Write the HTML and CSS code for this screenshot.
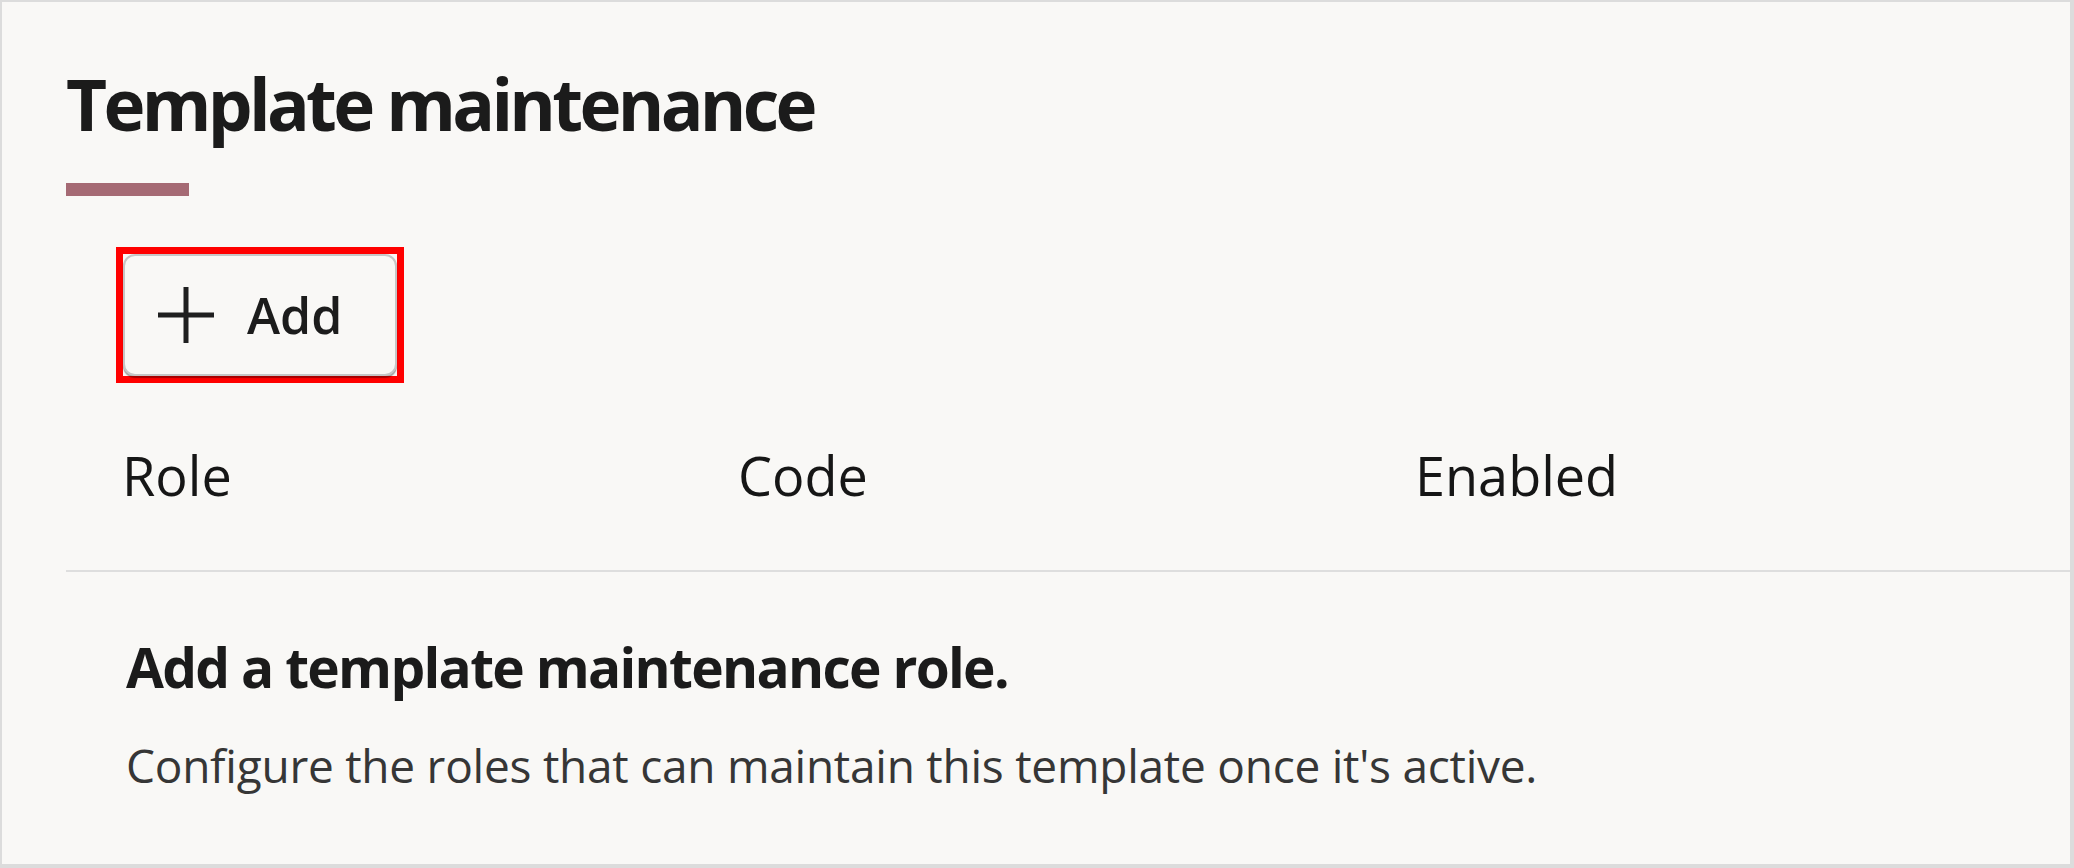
FILE: index.html
```html
<!DOCTYPE html>
<html lang="en">
<head>
    <meta charset="UTF-8">
    <meta name="viewport" content="width=device-width, initial-scale=1.0">
    <title>Template maintenance</title>
    <link rel="stylesheet" href="styles.css">
</head>
<body>
    <div class="panel">
        <h1 class="panel-title">Template maintenance</h1>
        <div class="title-accent"></div>

        <div class="toolbar">
            <span class="highlight">
                <button class="add-button" type="button">
                    <svg class="add-icon" viewBox="0 0 58 58" aria-hidden="true">
                        <line x1="29" y1="1" x2="29" y2="57" />
                        <line x1="1" y1="29" x2="57" y2="29" />
                    </svg>
                    <span>Add</span>
                </button>
            </span>
        </div>

        <div class="table-header">
            <div class="col">Role</div>
            <div class="col">Code</div>
            <div class="col">Enabled</div>
        </div>

        <div class="empty-state">
            <h2>Add a template maintenance role.</h2>
            <p>Configure the roles that can maintain this template once it's active.</p>
        </div>
    </div>
</body>
</html>
```

FILE: styles.css
```css
html, body {
    margin: 0;
    padding: 0;
}
body {
    font-family: "Open Sans", "Noto Sans", sans-serif;
    color: #1c1c1c;
    background-color: #f9f8f6;
}
.panel {
    box-sizing: border-box;
    width: 2074px;
    height: 868px;
    padding: 52px 0 0 64px;
    background-color: #f9f8f6;
    border-style: solid;
    border-color: #dcdcdc;
    border-width: 2px 4px 4px 2px;
    overflow: hidden;
}
.panel-title {
    margin: 0;
    font-size: 71px;
    line-height: 100px;
    font-weight: 700;
    letter-spacing: -3.7px;
    color: #1b1b1b;
}
.title-accent {
    width: 123px;
    height: 13px;
    margin-top: 29px;
    background-color: #a56a74;
}
.toolbar {
    margin: 51px 0 0 50px;
    display: flex;
}
.highlight {
    display: inline-flex;
    border: 7px solid #ff0000;
}
.add-button {
    box-sizing: border-box;
    width: 274px;
    height: 122px;
    display: flex;
    align-items: center;
    gap: 32px;
    padding: 0 0 0 32px;
    font-family: inherit;
    font-size: 50px;
    font-weight: 600;
    color: #1c1c1c;
    background-color: #f9f8f6;
    border: 2px solid #c6c6c6;
    border-radius: 12px;
    box-shadow: 0 2px 1px rgba(0,0,0,0.35);
}
.add-icon {
    width: 58px;
    height: 58px;
    stroke: #1f1f1f;
    stroke-width: 5;
}
.table-header {
    display: grid;
    grid-template-columns: 616px 677px 1fr;
    margin-top: 55px;
    padding: 0 0 58px 56px;
    border-bottom: 2px solid #dedede;
    font-size: 54px;
    line-height: 74px;
    font-weight: 500;
    color: #161616;
}
.empty-state {
    padding-left: 60px;
}
.empty-state h2 {
    margin: 57px 0 0;
    font-size: 55px;
    line-height: 76px;
    font-weight: 700;
    letter-spacing: -1.7px;
    color: #1b1b1b;
}
.empty-state p {
    margin: 29px 0 0;
    font-size: 46px;
    line-height: 62px;
    letter-spacing: -0.25px;
    color: #363636;
}
```
